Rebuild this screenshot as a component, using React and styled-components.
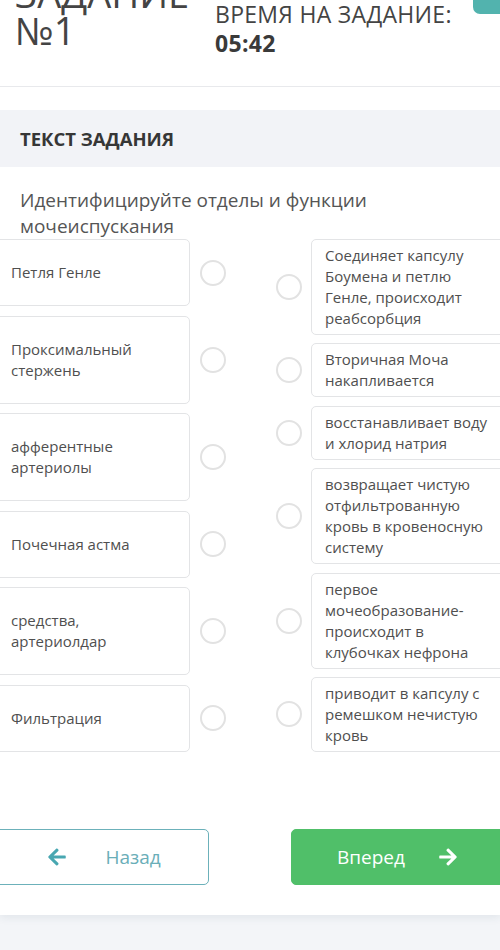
import React from "react";
import styled, { createGlobalStyle } from "styled-components";
import { FaArrowLeft, FaArrowRight } from "react-icons/fa";

const Global = createGlobalStyle`
  html, body { margin: 0; padding: 0; background: #f3f5f8; }
  body { font-family: "Open Sans", "Noto Sans", sans-serif; overflow: hidden; }
  * { box-sizing: border-box; }
`;

const Page = styled.div`
  width: 500px;
  overflow: hidden;
`;

const Main = styled.div`
  background: #fff;
  position: relative;
  z-index: 1;
  box-shadow: 0 3px 8px rgba(40, 60, 90, 0.08);
  padding-bottom: 30px;
`;

const Header = styled.header`
  height: 87px;
  display: flex;
  align-items: flex-start;
  padding-left: 15px;
  border-bottom: 1px solid #e8e9ec;
  background: #fff;
`;

const Title = styled.h1`
  width: 200px;
  margin: -25px 0 0;
  font-size: 38px;
  line-height: 37px;
  font-weight: 400;
  color: #444;
`;

const Timer = styled.div`
  font-size: 23px;
  line-height: 29px;
  letter-spacing: 0.3px;
  color: #444;
`;

const TimerValue = styled.div`
  font-weight: 700;
  color: #3a3a3a;
`;

const Tab = styled.div`
  margin-left: auto;
  width: 27px;
  height: 14px;
  background: #52b3ae;
  border-bottom-left-radius: 7px;
`;

const Spacer = styled.div`
  height: 23px;
`;

const Section = styled.div`
  height: 57px;
  background: #f2f3f7;
  display: flex;
  align-items: center;
  padding-left: 20px;
  font-size: 18.5px;
  font-weight: 700;
  color: #363636;
`;

const Question = styled.p`
  margin: 0;
  padding: 20px 20px 0;
  font-size: 19px;
  line-height: 26px;
  color: #555;
`;

const Match = styled.div`
  display: flex;
  justify-content: space-between;
  margin-left: -8px;
  width: 518px;
  height: 513px;
`;

const Column = styled.div`
  width: 234px;
  display: flex;
  flex-direction: column;
  justify-content: space-between;
`;

const Item = styled.div`
  display: flex;
  align-items: center;
  gap: ${(p) => (p.$side === "left" ? "10px" : "9px")};
`;

const Card = styled.div`
  flex: 1;
  background: #fff;
  border: 1px solid #e3e4e6;
  border-radius: 5px;
  font-size: 15px;
  line-height: 21px;
  color: #4f4f4f;
  padding: ${(p) => (p.$side === "left" ? "22px 18px 22px 18px" : "5px 18px 5px 13px")};
`;

const Radio = styled.span`
  flex: none;
  width: 26px;
  height: 26px;
  border-radius: 50%;
  border: 2px solid #e2e2e2;
  background: #fff;
`;

const Nav = styled.div`
  display: flex;
  justify-content: space-between;
  margin: 77px 0 0 -10px;
  width: 520px;
`;

const Button = styled.button`
  width: 219px;
  height: 56px;
  border-radius: 5px;
  font-family: inherit;
  font-size: 19px;
  display: flex;
  align-items: center;
  justify-content: center;
  gap: ${(p) => (p.$primary ? "33px" : "38px")};
  cursor: pointer;
  border: 1px solid ${(p) => (p.$primary ? "#50bf69" : "#6cb1ba")};
  background: ${(p) => (p.$primary ? "#50bf69" : "#fff")};
  color: ${(p) => (p.$primary ? "#fff" : "#6aaeb8")};
  padding: ${(p) => (p.$primary ? "0 6px 0 0" : "0 0 0 9px")};
`;

const Arrow = styled.span`
  display: flex;
  font-size: 20px;
  color: ${(p) => (p.$primary ? "#fff" : "#48a7b1")};
`;

const Footer = styled.div`
  height: 40px;
  background: #f3f5f8;
`;

const left = [
  "Петля Генле",
  "Проксимальный стержень",
  "афферентные артериолы",
  "Почечная астма",
  "средства, артериолдар",
  "Фильтрация",
];

const right = [
  "Соединяет капсулу Боумена и петлю Генле, происходит реабсорбция",
  "Вторичная Моча накапливается",
  "восстанавливает воду и хлорид натрия",
  "возвращает чистую отфильтрованную кровь в кровеносную систему",
  "первое мочеобразование-происходит в клубочках нефрона",
  "приводит в капсулу с ремешком нечистую кровь",
];

export default function App() {
  return (
    <Page>
      <Global />
      <Main>
        <Header>
          <Title>
            ЗАДАНИЕ
            <br />
            №1
          </Title>
          <Timer>
            ВРЕМЯ НА ЗАДАНИЕ:
            <TimerValue>05:42</TimerValue>
          </Timer>
          <Tab />
        </Header>
        <Spacer />
        <Section>ТЕКСТ ЗАДАНИЯ</Section>
        <Question>
          Идентифицируйте отделы и функции
          <br />
          мочеиспускания
        </Question>
        <Match>
          <Column>
            {left.map((t) => (
              <Item key={t} $side="left">
                <Card $side="left">{t}</Card>
                <Radio />
              </Item>
            ))}
          </Column>
          <Column>
            {right.map((t) => (
              <Item key={t} $side="right">
                <Radio />
                <Card $side="right">{t}</Card>
              </Item>
            ))}
          </Column>
        </Match>
        <Nav>
          <Button>
            <Arrow>
              <FaArrowLeft />
            </Arrow>
            Назад
          </Button>
          <Button $primary>
            Вперед
            <Arrow $primary>
              <FaArrowRight />
            </Arrow>
          </Button>
        </Nav>
      </Main>
      <Footer />
    </Page>
  );
}
